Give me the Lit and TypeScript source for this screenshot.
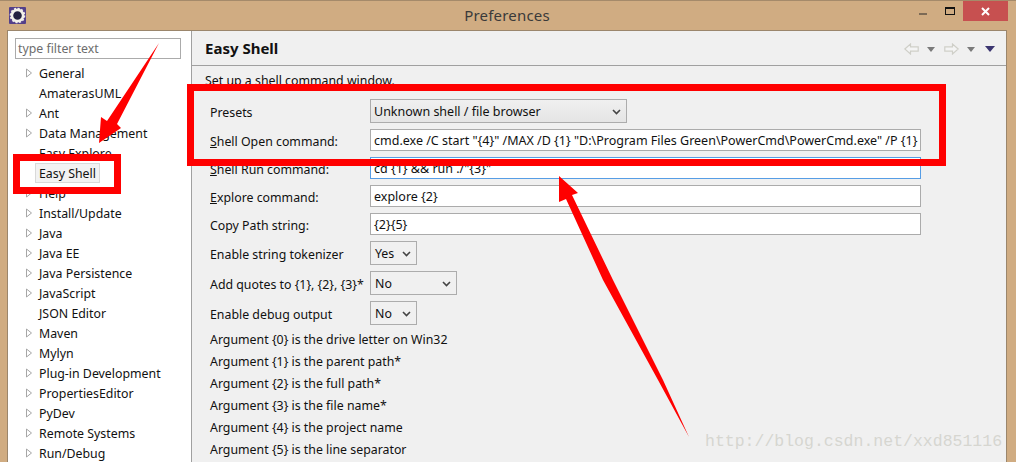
import { LitElement, html, css } from "lit";
import { customElement } from "lit/decorators.js";

const tree: [string, boolean][] = [
  ["General", true], ["AmaterasUML", false], ["Ant", true], ["Data Management", true],
  ["Easy Explore", false], ["Easy Shell", false], ["Help", true], ["Install/Update", true],
  ["Java", true], ["Java EE", true], ["Java Persistence", true], ["JavaScript", true],
  ["JSON Editor", false], ["Maven", true], ["Mylyn", true], ["Plug-in Development", true],
  ["PropertiesEditor", true], ["PyDev", true], ["Remote Systems", true], ["Run/Debug", true],
];
const args = [
  "Argument {0} is the drive letter on Win32", "Argument {1} is the parent path*",
  "Argument {2} is the full path*", "Argument {3} is the file name*",
  "Argument {4} is the project name", "Argument {5} is the line separator",
];
const chevron = html`<svg class="chev" viewBox="0 0 9 6"><path d="M1 1l3.5 3.5L8 1" fill="none" stroke="#444" stroke-width="1.6"/></svg>`;

@customElement("app-root")
export class AppRoot extends LitElement {
  static styles = css`
    :host { display: block; width: 1016px; height: 462px; overflow: hidden; position: relative;
      background: #d0ac82; font: 12.35px "Noto Sans", sans-serif; color: #111; }
    .title { height: 31px; display: flex; align-items: center; position: relative; box-sizing: border-box; border-top: 1px solid #a58a6a; }
    .title .ico { margin-left: 9px; width: 17px; height: 17px; margin-top: -2px; }
    .title .t { position: absolute; left: 0; right: 2px; text-align: center; top: 4px; font-size: 15px; color: #3a3a3a; letter-spacing: .2px; }
    .ctl { position: absolute; right: 8px; top: 0; display: flex; align-items: flex-start; }
    .min { width: 8px; height: 2px; background: #7c6a55; margin: 12px 18px 0 0; }
    .max { width: 8px; height: 5px; border: 1px solid #111; border-top-width: 2px; margin: 6px 8px 0 0; }
    .close { width: 45px; height: 20px; background: #c75050; display: flex; align-items: center; justify-content: center; }
    .client { position: absolute; left: 7px; top: 30px; width: 1000px; height: 432px; box-sizing: border-box;
      border: 1px solid #9b866c; border-bottom: 0; display: flex; background: #f0f0f0; }
    .side { width: 184px; background: #fff; border-right: 1px solid #a0a0a0; flex: none; padding: 7px 0 0 7px; box-sizing: border-box; }
    .filter { width: 166px; height: 21px; box-sizing: border-box; border: 1px solid #ababab; color: #6d6d6d; padding: 0 2px; line-height: 19px; font-size: 12.3px; }
    .tree { margin-top: 4px; }
    .node { height: 20px; display: flex; align-items: center; white-space: nowrap; }
    .tw { width: 8px; height: 10px; margin-left: 11px; flex: none; }
    .lbl { margin-left: 1px; padding: 0 3px; height: 20px; line-height: 19px; box-sizing: border-box; border: 1px solid transparent; }
    .lbl.sel { background: #f2f2f2; border-color: #d9d9d9; }
    .main { flex: 1; min-width: 0; }
    .head { height: 34px; border-bottom: 1px solid #a0a0a0; display: flex; align-items: center; padding: 0 11px 0 13px; position: relative; box-sizing: content-box; }
    .head b { font-size: 15px; font-weight: 700; flex: 1; }
    .tools { display: flex; align-items: center; margin-top: 2px; }
    .dd { width: 8px; height: 5px; margin: 0 9px 0 8px; }
    .dd.last { margin-right: 10px; }
    .body { padding: 6px 0 0 18px; }
    .desc { height: 22px; line-height: 17px; margin-left: -5px; }
    .form { display: grid; grid-template-columns: 160px 551px; row-gap: 6px; align-items: center; margin-top: 5px; }
    .form label { white-space: nowrap; padding-top: 2px; }
    .form label u { text-decoration: underline; }
    .input { height: 22px; box-sizing: border-box; border: 1px solid #ababab; background: #fff; padding: 0 3px; line-height: 21px; white-space: nowrap; overflow: hidden; font-size: 12.5px; }
    .input.focus { border-color: #569de5; }
    .combo { height: 24px; box-sizing: border-box; border: 1px solid #acacac; background: #fff; padding: 1px 4px 0; display: flex; align-items: center; justify-content: space-between; }
    .combo.grad { background: linear-gradient(#f0f0f0, #e5e5e5); width: 257px; font-size: 12.5px; padding-left: 3px; }
    .combo.s { width: 47px; background: #f0f0f0; } .combo.m { width: 87px; background: #f0f0f0; }
    .chev { width: 9px; height: 6px; margin-right: 1px; }
    .args { margin-top: 3px; }
    .args div { height: 22px; line-height: 24px; white-space: nowrap; }
    .over { position: absolute; left: 0; top: 0; width: 1016px; height: 462px; pointer-events: none; }
    .wm { position: absolute; left: 705px; top: 432px; font: 16.5px "Liberation Mono", monospace; color: #d6d6d0; white-space: nowrap; }
  `;
  render() {
    return html`
      <div class="title">
        <svg class="ico" viewBox="0 0 17 17"><rect width="17" height="17" rx="1" fill="#54408a"/><circle cx="8.5" cy="8.5" r="5.6" fill="#22203f" stroke="#f2f0ea" stroke-width="2.6"/><circle cx="8.5" cy="8.5" r="7" fill="none" stroke="#f2f0ea" stroke-width="1.6" stroke-dasharray="2 1.66"/></svg>
        <div class="t">Preferences</div>
        <div class="ctl"><div class="min"></div><div class="max"></div><div class="close">
          <svg width="9" height="9" viewBox="0 0 9 9"><path d="M1 1l7 7M8 1L1 8" stroke="#fff" stroke-width="2"/></svg></div></div>
      </div>
      <div class="client">
        <div class="side">
          <div class="filter">type filter text</div>
          <div class="tree">
            ${tree.map(([n, t]) => html`<div class="node">
              ${t ? html`<svg class="tw" viewBox="0 0 8 10"><path d="M.5 1v8l5-4z" fill="#fff" stroke="#a6a6a6"/></svg>` : html`<span class="tw"></span>`}
              <span class="lbl ${n === "Easy Shell" ? "sel" : ""}">${n}</span></div>`)}
          </div>
        </div>
        <div class="main">
          <div class="head"><b>Easy Shell</b>
            <div class="tools">
              <svg width="15" height="12" viewBox="0 0 15 12"><path d="M.8 6L6.5 1v2.8h7.7v4.4H6.5V11z" fill="#f4f4f4" stroke="#cfcfc8" stroke-width="1.2"/></svg>
              <svg class="dd" viewBox="0 0 8 5"><path d="M0 0h8L4 5z" fill="#7a7a7a"/></svg>
              <svg width="15" height="12" viewBox="0 0 15 12"><path d="M14.2 6L8.5 1v2.8H.8v4.4h7.7V11z" fill="#f4f4f4" stroke="#cfcfc8" stroke-width="1.2"/></svg>
              <svg class="dd last" viewBox="0 0 8 5"><path d="M0 0h8L4 5z" fill="#7a7a7a"/></svg>
              <svg width="10" height="6" viewBox="0 0 10 6"><path d="M0 0h10L5 6z" fill="#3b3570"/></svg>
            </div>
          </div>
          <div class="body">
            <div class="desc">Set up a shell command window.</div>
            <div class="form">
              <label>Presets</label><div class="combo grad">Unknown shell / file browser ${chevron}</div>
              <label><u>S</u>hell Open command:</label><div class="input">cmd.exe /C start "{4}" /MAX /D {1} "D:\\Program Files Green\\PowerCmd\\PowerCmd.exe" /P {1}</div>
              <label><u>S</u>hell Run command:</label><div class="input focus">cd {1} &amp;&amp; run ./"{3}"</div>
              <label><u>E</u>xplore command:</label><div class="input">explore {2}</div>
              <label>Copy Path string:</label><div class="input">{2}{5}</div>
              <label>Enable string tokenizer</label><div class="combo s">Yes ${chevron}</div>
              <label>Add quotes to {1}, {2}, {3}*</label><div class="combo m">No ${chevron}</div>
              <label>Enable debug output</label><div class="combo s">No ${chevron}</div>
            </div>
            <div class="args">${args.map((a) => html`<div>${a}</div>`)}</div>
          </div>
        </div>
      </div>
      <svg class="over" viewBox="0 0 1016 462">
        <path fill="#f00" fill-rule="evenodd" d="M187 84H946V166H187zM194 91V159H939V91z"/>
        <path fill="#f00" fill-rule="evenodd" d="M13 154H121V194H13zM20 161V187H114V161z"/>
        <path fill="#f00" d="M159 43L117 124 121 128 99 143 101 117 107 121z"/>
        <path fill="#f00" d="M559 176L578 193 572 195 613 280 663 380 689 437 658 380 603 280 566 199 559 202z"/>
      </svg>
      <div class="wm">http://blog.csdn.net/xxd851116</div>
    `;
  }
}
